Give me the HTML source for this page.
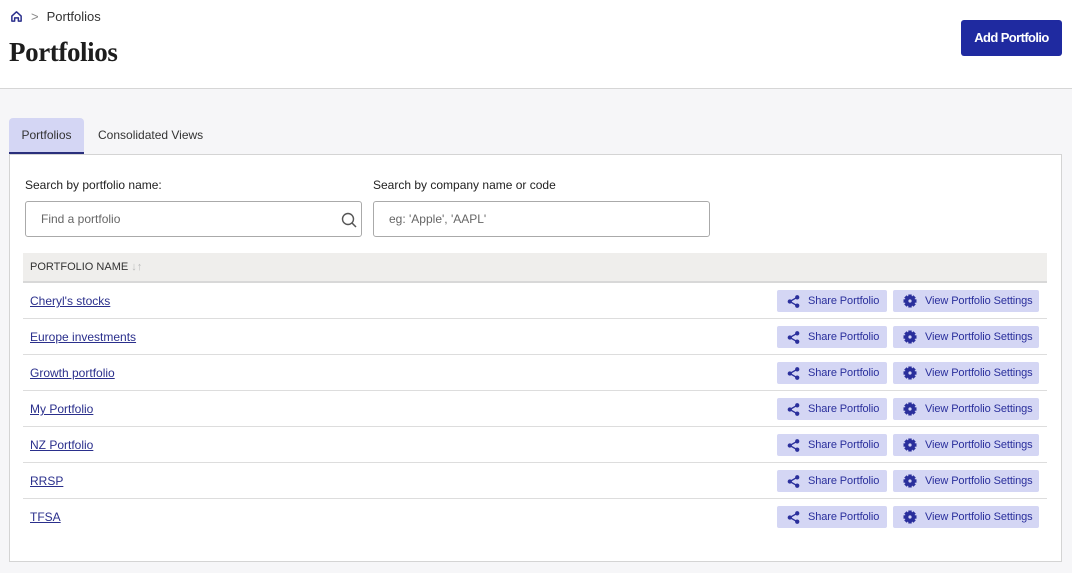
<!DOCTYPE html>
<html><head><style>
body{margin:0;width:1072px;height:573px;overflow:hidden;background:#f6f6f8;font-family:"Liberation Sans",Arial,sans-serif;position:relative}
.hdr{position:absolute;left:0;top:0;width:1072px;height:88px;background:#fff;border-bottom:1px solid #d6d6d6}
.bc{position:absolute;left:10px;top:9px;font-size:13px;color:#333;display:flex;align-items:center}
h1{position:absolute;left:9px;top:37px;margin:0;font-family:"Liberation Serif",serif;font-size:27px;font-weight:bold;color:#1d1d1d;letter-spacing:-0.4px}
.add{position:absolute;left:961px;top:20px;width:101px;height:36px;background:#1f2aa0;border-radius:3px;color:#fff;font-size:13px;font-weight:bold;text-align:center;line-height:35px;letter-spacing:-0.6px}
.tab{position:absolute;top:118px;height:35px;font-size:12px;color:#333;line-height:35px}
.t1{left:9px;width:75px;background:#d4d6f4;border-radius:4px 4px 0 0;text-align:center;border-bottom:2px solid #2a2f7c;height:34px}
.t2{left:98px}
.panel{position:absolute;left:9px;top:154px;width:1051px;height:406px;background:#fff;border:1px solid #d4d4d4}
.lbl{position:absolute;top:178px;font-size:12px;color:#222}
.inp{position:absolute;top:201px;width:335px;border:1px solid #aaa;border-radius:3px;background:#fff;font-size:12px;color:#666;line-height:34px;box-sizing:border-box;padding-left:15px;height:36px}
.th{position:absolute;left:23px;top:253px;width:1024px;background:#efeeec;border-bottom:2px solid #d8d8d8;font-size:11px;color:#333;line-height:28px;padding-left:7px;box-sizing:border-box;height:30px}
.row{position:absolute;left:23px;width:1024px;height:36px;border-bottom:1px solid #ddd;box-sizing:border-box}
.row a{position:absolute;left:7px;top:11px;font-size:12px;color:#2a2f8c;text-decoration:underline}
.b{position:absolute;top:7px;height:22px;background:#d4d6f4;border-radius:2px;font-size:11px;color:#2a2f9c;line-height:22px;display:flex;align-items:center;letter-spacing:-0.1px}
.s{left:754px;width:110px}.v{left:870px;width:146px}
.b svg{margin:0 8px 0 10px}
</style></head><body>
<div class="hdr">
<div class="bc"><svg width="13" height="13" viewBox="0 0 14 14"><path d="M2 6.5L7 2l5 4.5V12H9V8.5H5V12H2z" fill="none" stroke="#2a2f8c" stroke-width="1.6" stroke-linejoin="round"/></svg><span style="margin:0 8px;color:#888">&gt;</span>Portfolios</div>
<h1>Portfolios</h1>
<div class="add">Add Portfolio</div>
</div>
<div class="tab t1">Portfolios</div>
<div class="tab t2">Consolidated Views</div>
<div class="panel"></div>
<div class="lbl" style="left:25px">Search by portfolio name:</div>
<div class="lbl" style="left:373px">Search by company name or code</div>
<div class="inp" style="left:25px;width:337px">Find a portfolio<svg style="position:absolute;right:4px;top:10px" width="16" height="16" viewBox="0 0 16 16"><circle cx="7" cy="7" r="5.5" fill="none" stroke="#555" stroke-width="1.4"/><path d="M11 11l4 4" stroke="#555" stroke-width="1.5"/></svg></div>
<div class="inp" style="left:373px;width:337px">eg: 'Apple', 'AAPL'</div>
<div class="th">PORTFOLIO NAME <span style="color:#bbb">↓↑</span></div>
<div id="rows"></div>
<script>
var n=["Cheryl's stocks","Europe investments","Growth portfolio","My Portfolio","NZ Portfolio","RRSP","TFSA"],h="";
var sh='<svg width="13" height="13" viewBox="0 0 14 14"><circle cx="3" cy="7" r="2.3" fill="#2a2f9c"/><circle cx="11" cy="2.5" r="2.3" fill="#2a2f9c"/><circle cx="11" cy="11.5" r="2.3" fill="#2a2f9c"/><path d="M3 7L11 2.5M3 7l8 4.5" stroke="#2a2f9c" stroke-width="1.4"/></svg>';
var gr='<svg width="14" height="14" viewBox="0 0 14 14"><g fill="#2a2f9c"><circle cx="7" cy="7" r="5.2"/><rect x="5.3" y="0.5" width="3.4" height="13"/><rect x="0.5" y="5.3" width="13" height="3.4"/><rect x="5.3" y="0.5" width="3.4" height="13" transform="rotate(45 7 7)"/><rect x="5.3" y="0.5" width="3.4" height="13" transform="rotate(-45 7 7)"/></g><circle cx="7" cy="7" r="1.6" fill="#d4d6f4"/></svg>';
for(var i=0;i<7;i++){h+='<div class="row" style="top:'+(283+i*36)+'px;'+(i==6?'border:none':'')+'"><a>'+n[i]+'</a><div class="b s">'+sh+'Share Portfolio</div><div class="b v">'+gr+'View Portfolio Settings</div></div>';}
document.getElementById('rows').innerHTML=h;
</script>
</body></html>
